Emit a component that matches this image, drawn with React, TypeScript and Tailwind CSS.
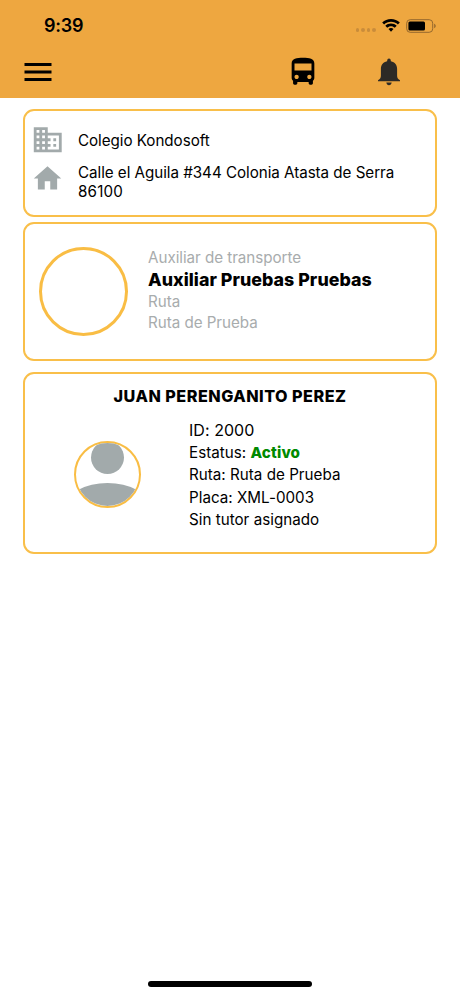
import type { ReactNode } from 'react';
import { MdBusiness, MdDirectionsBus, MdHome, MdMenu } from 'react-icons/md';

const student = {
  name: 'JUAN PERENGANITO PEREZ',
  id: '2000',
  status: 'Activo',
  route: 'Ruta de Prueba',
  plate: 'XML-0003',
};

function Card({ className, children }: { className: string; children: ReactNode }) {
  return (
    <section className={`rounded-[11px] border-2 border-[#f9bf4a] bg-white ${className}`}>
      {children}
    </section>
  );
}

function BellIcon() {
  return (
    <svg viewBox="0 0 24 28" className="h-7 w-6 fill-[#2d2a26]">
      <path d="M12 .5c-1.100 0-1.700.8-1.800 1.900l-.1.800C6 4 3.900 7 3.900 10.800V17.500c0 2.200-.6 3.300-2.900 4.800v1h22v-1c-2.300-1.500-2.900-2.600-2.900-4.800v-6.700C20.100 7 18 4 13.900 3.200l-.1-.8C13.700 1.300 13.100.5 12 .5z" />
      <path d="M9.300 24.500h5.400c-.2 1.600-1.300 2.700-2.700 2.700s-2.500-1.100-2.700-2.700z" />
    </svg>
  );
}

function StatusBar() {
  return (
    <div className="flex h-[51px] items-center justify-between pr-[24px] pl-11">
      <time className="text-[18px] leading-6 font-semibold tracking-[-0.2px]">9:39</time>
      <div className="flex items-center">
        <div className="mt-[9px] mr-[6px] flex gap-[2px]">
          <span className="size-[3.5px] rounded-full bg-[#c98c3a]" />
          <span className="size-[3.5px] rounded-full bg-[#c98c3a]" />
          <span className="size-[3.5px] rounded-full bg-[#c98c3a]" />
          <span className="size-[3.5px] rounded-full bg-[#c98c3a]" />
        </div>
        <svg viewBox="0 0 18 13" className="mr-[6.5px] h-[13px] w-[18px] fill-black">
          <path d="M9 0C5.600 0 2.500 1.300.2 3.500l1.900 2C3.900 3.700 6.300 2.700 9 2.700s5.100 1 6.900 2.800l1.900-2C15.500 1.300 12.400 0 9 0z" />
          <path d="M9 4.500c-2.200 0-4.200.9-5.700 2.300l1.900 2C6.200 7.800 7.500 7.200 9 7.200s2.800.6 3.800 1.600l1.900-2C13.200 5.400 11.200 4.500 9 4.500z" />
          <path d="M9 9c-1 0-1.900.4-2.500 1L9 12.700 11.500 10C10.900 9.400 10 9 9 9z" />
        </svg>
        <svg viewBox="0 0 30 14" className="h-[14px] w-[30px]">
          <rect x=".7" y=".7" width="26" height="12.600" rx="3.500" fill="none" stroke="#94682d" />
          <rect x="2.400" y="2.400" width="16.600" height="9.200" rx="1.500" />
          <path d="M28.200 4.800c1 .4 1.500 1.200 1.500 2.200s-.5 1.800-1.500 2.200z" fill="#94682d" />
        </svg>
      </div>
    </div>
  );
}

export default function App() {
  return (
    <div className="flex h-[996px] w-[460px] flex-col bg-white font-[Inter,sans-serif] text-[15.2px] tracking-[-0.04px] text-black">
      <header className="h-[98px] bg-[#eea740]">
        <StatusBar />
        <nav className="flex items-start pl-5">
          <MdMenu className="mt-[3px] size-9" />
          <MdDirectionsBus className="mt-[4px] ml-[229.5px] size-[34px]" />
          <div className="mt-[7px] ml-[57.5px]">
            <BellIcon />
          </div>
        </nav>
      </header>

      <main className="flex flex-1 flex-col px-[23px] pt-[11px]">
        <Card className="h-[108px] pt-[11px] pl-[6px]">
          <div className="flex h-[36px] items-center">
            <MdBusiness className="size-[33.5px] text-[#a2aaab]" />
            <p className="mt-[2px] ml-[13.5px] whitespace-nowrap">Colegio Kondosoft</p>
          </div>
          <div className="mt-[4px] flex items-start">
            <MdHome className="size-[33px] text-[#a2aaab]" />
            <p className="mt-[0.5px] ml-[14px] leading-[19px] whitespace-nowrap">
              Calle el Aguila #344 Colonia Atasta de Serra
              <br />
              <span className="tracking-[0.2px]">86100</span>
            </p>
          </div>
        </Card>

        <Card className="mt-[5px] flex h-[139px] pt-[23px] pl-[14px]">
          <div className="size-[89px] rounded-full border-[3px] border-[#f9bd44]" />
          <div className="ml-[20px] whitespace-nowrap text-[#a8acad]">
            <p className="leading-[21px]">Auxiliar de transporte</p>
            <p className="text-[17.8px] leading-[24px] font-extrabold tracking-[0.04px] text-black">
              Auxiliar Pruebas Pruebas
            </p>
            <p className="leading-[19px]">Ruta</p>
            <p className="leading-[24px]">Ruta de Prueba</p>
          </div>
        </Card>

        <Card className="mt-[11px] h-[182px] pt-[11px]">
          <h2 className="text-center text-[16.2px] leading-[22px] font-extrabold tracking-[0.48px]">
            {student.name}
          </h2>
          <div className="mt-[11px] flex pl-[49px]">
            <div className="mt-[23px] size-[67px] overflow-hidden rounded-full border-2 border-[#f9bd44]">
              <svg viewBox="0 0 63 63" className="size-full fill-[#a2aaab]">
                <circle cx="31.500" cy="14.500" r="16.500" />
                <ellipse cx="31.500" cy="63" rx="41" ry="23" />
              </svg>
            </div>
            <div className="ml-[48px] leading-[22.4px] tracking-[0.01px] whitespace-nowrap">
              <p className="text-[16px] leading-[24px] tracking-[0.05px]">ID: {student.id}</p>
              <p>
                Estatus:{' '}
                <span className="font-extrabold tracking-[0.15px] text-[#008a00]">{student.status}</span>
              </p>
              <p>Ruta: {student.route}</p>
              <p>Placa: {student.plate}</p>
              <p>Sin tutor asignado</p>
            </div>
          </div>
        </Card>
      </main>

      <footer className="flex h-[15px] justify-center">
        <div className="h-[6px] w-[164px] rounded-full bg-black" />
      </footer>
    </div>
  );
}
